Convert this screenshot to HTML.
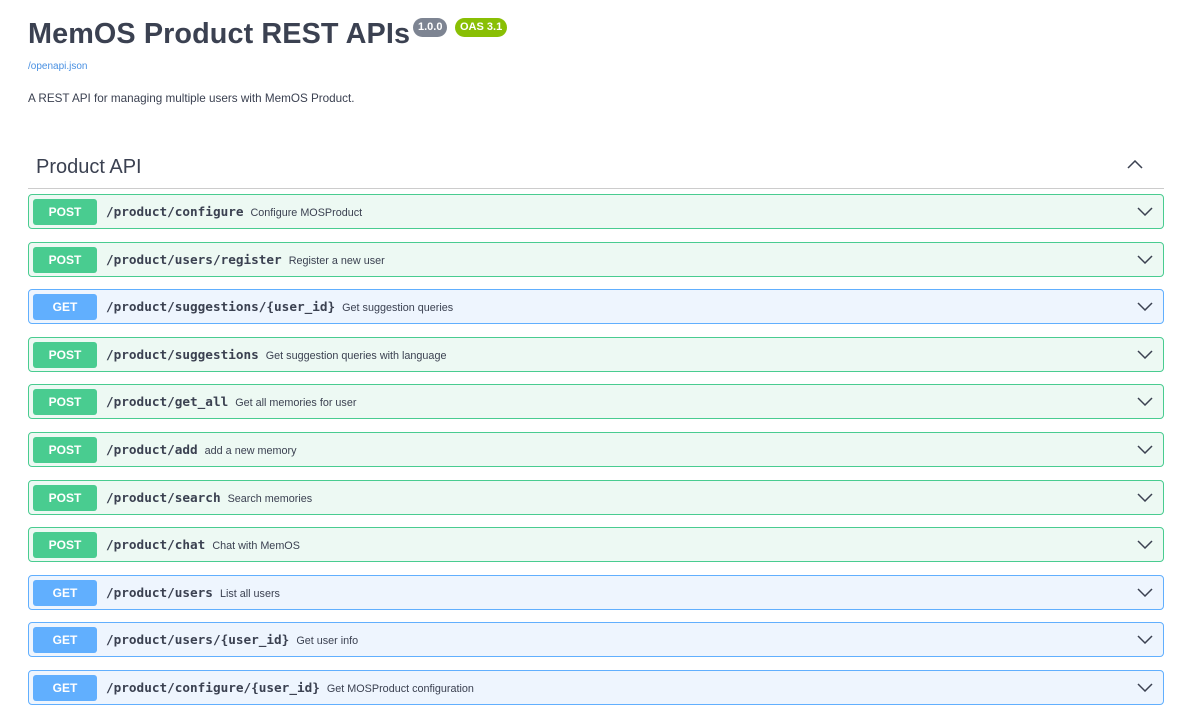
<!DOCTYPE html>
<html><head><meta charset="utf-8"><style>
body{margin:0;background:#fff;font-family:"Liberation Sans",sans-serif;color:#3b4151;width:1189px;height:716px;overflow:hidden}
.t{position:absolute;left:28px;top:18px;font-size:28.8px;font-weight:bold;color:#3b4151;letter-spacing:0.1px}
.b{position:absolute;top:18px;height:19px;line-height:19px;border-radius:10px;color:#fff;font-size:11px;font-weight:bold;padding:0 5px}
.lnk{position:absolute;left:28px;top:61px;font-size:10px;color:#4990e2}
.d{position:absolute;left:28px;top:92px;font-size:11.7px}
.h{position:absolute;left:36px;top:156px;font-size:20px}
.hl{position:absolute;left:28px;top:188px;width:1136px;height:1px;background:#ccc}
.r{position:absolute;left:28px;width:1134px;height:33px;border:1px solid;border-radius:4px}
.p{background:#edf9f3;border-color:#49cc90}.g{background:#eef5fe;border-color:#61affe}
.m{position:absolute;left:4px;top:4px;width:64px;height:26px;line-height:26px;border-radius:3px;color:#fff;font-weight:bold;font-size:12px;text-align:center}
.p .m{background:#49cc90}.g .m{background:#61affe}
.pa{position:absolute;left:77px;top:9px;font-family:"DejaVu Sans Mono",monospace;font-weight:bold;font-size:12.7px;color:#3b4151}
.pa span{font-family:"Liberation Sans",sans-serif;font-weight:normal;font-size:10.8px;margin-left:7px}
.c{position:absolute;right:10px;top:11px}
</style></head><body>
<div class="t">MemOS Product REST APIs</div>
<div class="b" style="left:413px;background:#7d8492">1.0.0</div>
<div class="b" style="left:455px;background:#89bf04">OAS 3.1</div>
<div class="lnk">/openapi.json</div>
<div class="d">A REST API for managing multiple users with MemOS Product.</div>
<div class="h">Product API</div>
<svg style="position:absolute;left:1127px;top:160px" width="16" height="10"><path d="M1 8L8 1L15 8" fill="none" stroke="#3b4151" stroke-width="1.5"/></svg>
<div class="hl"></div>

<div class="r p" style="top:194px"><div class="m">POST</div><div class="pa">/product/configure<span>Configure MOSProduct</span></div><svg class="c" width="16" height="10"><path d="M1 2L8 9L15 2" fill="none" stroke="#3b4151" stroke-width="1.5"/></svg></div>
<div class="r p" style="top:242px"><div class="m">POST</div><div class="pa">/product/users/register<span>Register a new user</span></div><svg class="c" width="16" height="10"><path d="M1 2L8 9L15 2" fill="none" stroke="#3b4151" stroke-width="1.5"/></svg></div>
<div class="r g" style="top:289px"><div class="m">GET</div><div class="pa">/product/suggestions/{user_id}<span>Get suggestion queries</span></div><svg class="c" width="16" height="10"><path d="M1 2L8 9L15 2" fill="none" stroke="#3b4151" stroke-width="1.5"/></svg></div>
<div class="r p" style="top:337px"><div class="m">POST</div><div class="pa">/product/suggestions<span>Get suggestion queries with language</span></div><svg class="c" width="16" height="10"><path d="M1 2L8 9L15 2" fill="none" stroke="#3b4151" stroke-width="1.5"/></svg></div>
<div class="r p" style="top:384px"><div class="m">POST</div><div class="pa">/product/get_all<span>Get all memories for user</span></div><svg class="c" width="16" height="10"><path d="M1 2L8 9L15 2" fill="none" stroke="#3b4151" stroke-width="1.5"/></svg></div>
<div class="r p" style="top:432px"><div class="m">POST</div><div class="pa">/product/add<span>add a new memory</span></div><svg class="c" width="16" height="10"><path d="M1 2L8 9L15 2" fill="none" stroke="#3b4151" stroke-width="1.5"/></svg></div>
<div class="r p" style="top:480px"><div class="m">POST</div><div class="pa">/product/search<span>Search memories</span></div><svg class="c" width="16" height="10"><path d="M1 2L8 9L15 2" fill="none" stroke="#3b4151" stroke-width="1.5"/></svg></div>
<div class="r p" style="top:527px"><div class="m">POST</div><div class="pa">/product/chat<span>Chat with MemOS</span></div><svg class="c" width="16" height="10"><path d="M1 2L8 9L15 2" fill="none" stroke="#3b4151" stroke-width="1.5"/></svg></div>
<div class="r g" style="top:575px"><div class="m">GET</div><div class="pa">/product/users<span>List all users</span></div><svg class="c" width="16" height="10"><path d="M1 2L8 9L15 2" fill="none" stroke="#3b4151" stroke-width="1.5"/></svg></div>
<div class="r g" style="top:622px"><div class="m">GET</div><div class="pa">/product/users/{user_id}<span>Get user info</span></div><svg class="c" width="16" height="10"><path d="M1 2L8 9L15 2" fill="none" stroke="#3b4151" stroke-width="1.5"/></svg></div>
<div class="r g" style="top:670px"><div class="m">GET</div><div class="pa">/product/configure/{user_id}<span>Get MOSProduct configuration</span></div><svg class="c" width="16" height="10"><path d="M1 2L8 9L15 2" fill="none" stroke="#3b4151" stroke-width="1.5"/></svg></div>
</body></html>
